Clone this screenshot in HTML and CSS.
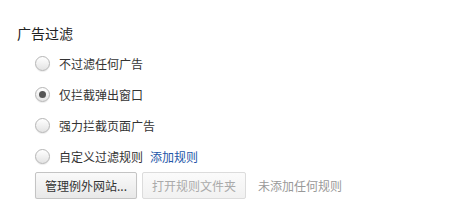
FILE: index.html
```html
<!DOCTYPE html>
<html lang="zh-CN">
<head>
    <meta charset="UTF-8">
    <title>广告过滤</title>
    <link rel="stylesheet" href="styles.css">
</head>
<body>
    <section class="settings">
        <h2 class="section-title">广告过滤</h2>
        <div class="options">
            <label class="option">
                <input type="radio" name="adfilter">
                <span class="radio"></span>
                <span>不过滤任何广告</span>
            </label>
            <label class="option">
                <input type="radio" name="adfilter" checked>
                <span class="radio"></span>
                <span>仅拦截弹出窗口</span>
            </label>
            <label class="option">
                <input type="radio" name="adfilter">
                <span class="radio"></span>
                <span>强力拦截页面广告</span>
            </label>
            <label class="option">
                <input type="radio" name="adfilter">
                <span class="radio"></span>
                <span>自定义过滤规则</span>
                <a class="link" href="#">添加规则</a>
            </label>
            <div class="actions">
                <button class="btn">管理例外网站...</button>
                <button class="btn" disabled>打开规则文件夹</button>
                <span class="hint">未添加任何规则</span>
            </div>
        </div>
    </section>
</body>
</html>
```

FILE: styles.css
```css
body {
    margin: 0;
    padding: 0;
    background-color: #ffffff;
    color: #333333;
    font-family: "Noto Sans CJK SC", "Liberation Sans", sans-serif;
    font-size: 12px;
}
.settings {
    padding: 23px 17px 0 17px;
}
.section-title {
    margin: 0;
    font-size: 14px;
    font-weight: normal;
    line-height: 20px;
    color: #222222;
}
.options {
    padding-left: 18px;
    padding-top: 5px;
}
.option {
    display: flex;
    align-items: center;
    height: 31px;
}
.option input {
    display: none;
}
.radio {
    width: 13px;
    height: 13px;
    border: 1px solid #b5b5b5;
    border-radius: 50%;
    background: linear-gradient(#ffffff, #e3e3e3);
    box-shadow: 0 1px 1px rgba(0,0,0,0.08);
    margin-right: 9px;
    position: relative;
}
.option input:checked + .radio::after {
    content: "";
    position: absolute;
    left: 3px;
    top: 3px;
    width: 7px;
    height: 7px;
    border-radius: 50%;
    background-color: #555555;
}
.link {
    margin-left: 7px;
    color: #2456a8;
    text-decoration: none;
}
.actions {
    display: flex;
    align-items: center;
    margin-top: 0;
}
.btn {
    font-family: inherit;
    font-size: 12px;
    color: #333333;
    height: 27px;
    padding: 0 9px;
    border: 1px solid #c4c4c4;
    border-radius: 2px;
    background: linear-gradient(#fafafa, #e8e8e8);
    box-shadow: 0 1px 1px rgba(0,0,0,0.1);
    margin-right: 5px;
}
.btn:disabled {
    color: #aaaaaa;
    border-color: #dcdcdc;
    background: linear-gradient(#fbfbfb, #f1f1f1);
    box-shadow: none;
}
.hint {
    margin-left: 7px;
    color: #999999;
}
```
